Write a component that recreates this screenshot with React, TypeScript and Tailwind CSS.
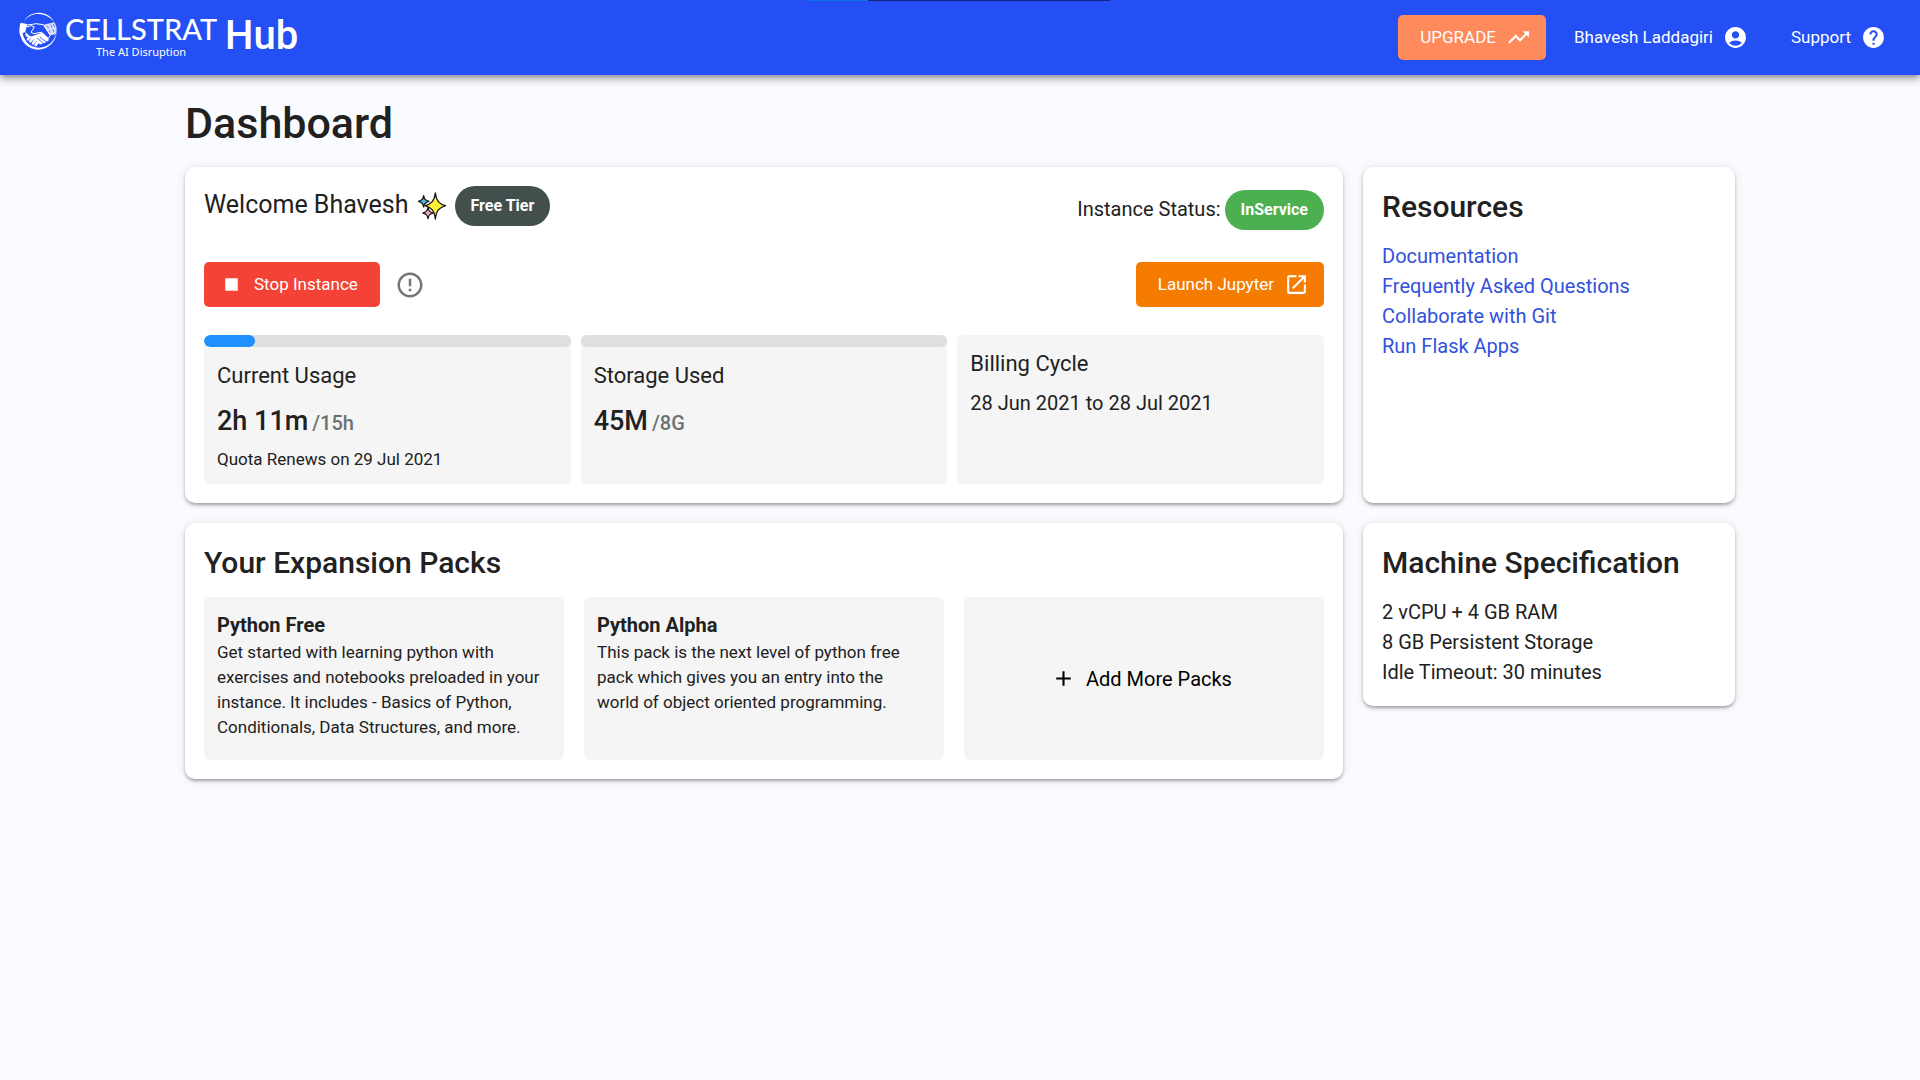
import type { ReactNode } from "react";
import {
  MdAccountCircle,
  MdAdd,
  MdErrorOutline,
  MdHelp,
  MdOpenInNew,
  MdStop,
  MdTrendingUp,
} from "react-icons/md";

const cardShadow =
  "shadow-[0_3px_4px_-2px_rgba(0,0,0,0.22),0_2px_3px_rgba(0,0,0,0.16),0_1px_9px_rgba(0,0,0,0.12)]";

function HandshakeMark() {
  return (
    <svg viewBox="0 0 114 114" className="size-[38px]" fill="none" aria-hidden="true">
      <path d="M14 28C26 8 48 0 68 3c18 3 32 14 38 28C95 16 78 7 60 6 41 5 25 13 14 28Z" fill="#fff" />
      <path d="M1 58c3 32 27 55 56 55 31 0 54-24 56-52-6 26-26 46-53 46C34 107 15 88 11 64Z" fill="#fff" />
      <path d="M5 32l19 4-5 24-16 6C0 54 1 42 5 32Z" fill="#fff" />
      <path d="M74 38l32-7c8 11 8 25 5 36l-17 3C86 60 80 50 74 38Z" fill="#fff" opacity="0.82" />
      <path d="M84 41l5 7m6-10l4 9m4-11l4 9M90 55l4 6m7-9l4 8" stroke="#234ff5" strokeWidth="2" />
      <path d="M23 39l18-2 10-2 22 3c8 12 14 22 21 32l-6 9-20-18-14 2-10 2-8-4 10-16-9-4-16 4Z" stroke="#fff" strokeWidth="3" strokeLinejoin="round" />
      <path d="M19 60l16 14 22-8 12-4 20 18c1 7-4 10-8 7 0 6-6 8-10 5-2 6-8 6-12 2-5 4-10 1-11-3L20 72Z" fill="#fff" />
      <path d="M62 74l18 15M54 78l17 14M46 84l13 10" stroke="#234ff5" strokeWidth="2.5" />
      <path d="M27 82l7-6M34 88l8-8M42 94l7-8M50 99l6-8" stroke="#fff" strokeWidth="8" strokeLinecap="round" />
      <path d="M31 83l6-6M38 90l7-8M46 95l6-7" stroke="#234ff5" strokeWidth="1.5" />
    </svg>
  );
}

function Sparkles() {
  return (
    <svg viewBox="0 0 84 84" className="size-7" stroke="#1a1a1a" strokeWidth="4" strokeLinejoin="round" role="img" aria-label="sparkles">
      <path d="M17 11c2 11 5 14 16 17-11 3-14 6-16 17-2-11-5-14-16-17 11-3 14-6 16-17Z" fill="#50bfe6" />
      <path d="M30 46c2 11 5 14 15 17-10 3-13 6-15 17-2-11-5-14-15-17 10-3 13-6 15-17Z" fill="#f7a8c4" />
      <path d="M52 3c3 23 11 33 31 38-20 6-28 15-31 40-3-25-11-34-31-40 20-5 28-15 31-38Z" fill="#fff035" />
    </svg>
  );
}

function Card({ title, className = "", children }: { title?: string; className?: string; children: ReactNode }) {
  return (
    <section className={`rounded-[10px] bg-white p-[19px] ${cardShadow} ${className}`}>
      {title && <h2 className="mb-[13px] text-[30px] leading-[42px] font-medium">{title}</h2>}
      {children}
    </section>
  );
}

function Chip({ className, children }: { className: string; children: ReactNode }) {
  return (
    <span className={`flex h-10 items-center rounded-full px-4 text-base font-bold text-white ${className}`}>
      {children}
    </span>
  );
}

function Meter({ label, value }: { label: string; value: number }) {
  return (
    <div
      role="progressbar"
      aria-label={label}
      aria-valuenow={value}
      className="h-3 overflow-hidden rounded-full bg-[#dfdfdf]"
    >
      <div className="h-full rounded-full bg-[#1e90ff]" style={{ width: `${value}%` }} />
    </div>
  );
}

function Stat({ title, meter, children }: { title: string; meter?: number; children: ReactNode }) {
  return (
    <div className="rounded-md bg-[#f5f5f5]">
      {meter !== undefined && <Meter label={title} value={meter} />}
      <div className="px-[13px] pt-[9px] pb-[13px]">
        <h3 className="text-[22px] leading-10">{title}</h3>
        {children}
      </div>
    </div>
  );
}

function Amount({ used, total }: { used: string; total: string }) {
  return (
    <p className="mt-[5px] text-[27px] leading-10 font-medium">
      {used}
      <span className="ml-1 text-xl text-[#6b7173]">/{total}</span>
    </p>
  );
}

function Pack({ name, children }: { name: string; children: ReactNode }) {
  return (
    <article className="rounded-md bg-[#f5f5f5] pt-[13px] pr-5 pb-5 pl-[13px]">
      <h3 className="text-xl leading-[30px] font-bold">{name}</h3>
      <p className="text-[17px] leading-[25px]">{children}</p>
    </article>
  );
}

const resources = ["Documentation", "Frequently Asked Questions", "Collaborate with Git", "Run Flask Apps"];
const specs = ["2 vCPU + 4 GB RAM", "8 GB Persistent Storage", "Idle Timeout: 30 minutes"];

export default function App() {
  return (
    <div className="min-h-screen bg-[#fafbff] font-[Roboto,sans-serif] text-[#212121]">
      <header className="relative flex h-[75px] items-center justify-between bg-[#234ff5] px-[19px] text-white shadow-[0_3px_5px_-1px_rgba(0,0,0,0.25),0_5px_8px_rgba(0,0,0,0.16),0_1px_12px_rgba(0,0,0,0.14)]">
        <div className="absolute top-0 left-[42%] flex h-px w-[304px]">
          <div className="w-[62px] bg-[#0f6fe8]" />
          <div className="flex-1 bg-[#15257a]" />
        </div>
        <a href="#" className="flex items-start self-start pt-3">
          <HandshakeMark />
          <span className="ml-2 flex flex-col items-center">
            <span className="font-[Lato,sans-serif] text-[29px] leading-[34px] font-medium">CELLSTRAT</span>
            <span className="font-['Noto_Sans',sans-serif] text-[11px] leading-3">The AI Disruption</span>
          </span>
          <span className="ml-2 text-[40px] leading-[48px] font-medium">Hub</span>
        </a>
        <nav className="flex items-center gap-1.5 text-[17px]">
          <button type="button" className="flex h-[45px] items-center gap-2.5 rounded-[5px] bg-[#ff8a5c] pr-[15px] pl-[22px]">
            UPGRADE
            <MdTrendingUp size={25} />
          </button>
          <button type="button" className="flex h-[45px] items-center gap-2.5 pr-[15px] pl-[22px]">
            Bhavesh Laddagiri
            <MdAccountCircle size={25} />
          </button>
          <button type="button" className="flex h-[45px] items-center gap-2.5 pr-[15px] pl-[22px]">
            Support
            <MdHelp size={25} />
          </button>
        </nav>
      </header>

      <main className="mx-auto max-w-[1550px] pt-[18px] pb-10">
        <h1 className="mb-3.5 text-[43px] leading-[60px] font-medium">Dashboard</h1>
        <div className="grid grid-cols-[minmax(0,1158fr)_minmax(0,372fr)] gap-5">
          <Card>
            <div className="flex items-start justify-between">
              <div className="flex items-start gap-[9px]">
                <p className="text-[25px] leading-[38px]">Welcome Bhavesh</p>
                <span className="pt-1.5">
                  <Sparkles />
                </span>
                <Chip className="bg-[#424f4c]">Free Tier</Chip>
              </div>
              <div className="mt-1 flex items-start gap-1">
                <p className="text-xl leading-[38px]">Instance Status:</p>
                <Chip className="bg-[#4caf50]">InService</Chip>
              </div>
            </div>
            <div className="mt-8 flex items-center justify-between text-[17px]">
              <div className="flex items-center gap-[15px]">
                <button type="button" className="flex h-[45px] items-center gap-2.5 rounded-[5px] bg-[#f44336] pr-[22px] pl-[15px] text-white">
                  <MdStop size={25} />
                  Stop Instance
                </button>
                <button type="button" aria-label="Instance information" className="text-[#757575]">
                  <MdErrorOutline size={30} />
                </button>
              </div>
              <button type="button" className="flex h-[45px] items-center gap-2.5 rounded-[5px] bg-[#f57c00] pr-[15px] pl-[22px] text-white">
                Launch Jupyter
                <MdOpenInNew size={25} />
              </button>
            </div>
            <div className="mt-7 grid grid-cols-3 gap-2.5">
              <Stat title="Current Usage" meter={14}>
                <Amount used="2h 11m" total="15h" />
                <p className="mt-1.5 text-[17px] leading-6">Quota Renews on 29 Jul 2021</p>
              </Stat>
              <Stat title="Storage Used" meter={0}>
                <Amount used="45M" total="8G" />
              </Stat>
              <Stat title="Billing Cycle">
                <p className="mt-[5px] text-xl leading-7">28 Jun 2021 to 28 Jul 2021</p>
              </Stat>
            </div>
          </Card>

          <Card title="Resources">
            <ul className="text-xl leading-[30px] text-[#3151dc]">
              {resources.map((name) => (
                <li key={name}>
                  <a href="#">{name}</a>
                </li>
              ))}
            </ul>
          </Card>

          <Card title="Your Expansion Packs">
            <div className="grid grid-cols-3 gap-5">
              <Pack name="Python Free">
                Get started with learning python with exercises and notebooks preloaded in your instance. It includes -
                Basics of Python, Conditionals, Data Structures, and more.
              </Pack>
              <Pack name="Python Alpha">
                This pack is the next level of python free pack which gives you an entry into the world of object
                oriented programming.
              </Pack>
              <button type="button" className="flex items-center justify-center gap-2.5 rounded-md bg-[#f5f5f5] pr-[5px] text-xl text-black">
                <MdAdd size={25} />
                Add More Packs
              </button>
            </div>
          </Card>

          <Card title="Machine Specification" className="self-start">
            <ul className="text-xl leading-[30px]">
              {specs.map((spec) => (
                <li key={spec}>{spec}</li>
              ))}
            </ul>
          </Card>
        </div>
      </main>
    </div>
  );
}
